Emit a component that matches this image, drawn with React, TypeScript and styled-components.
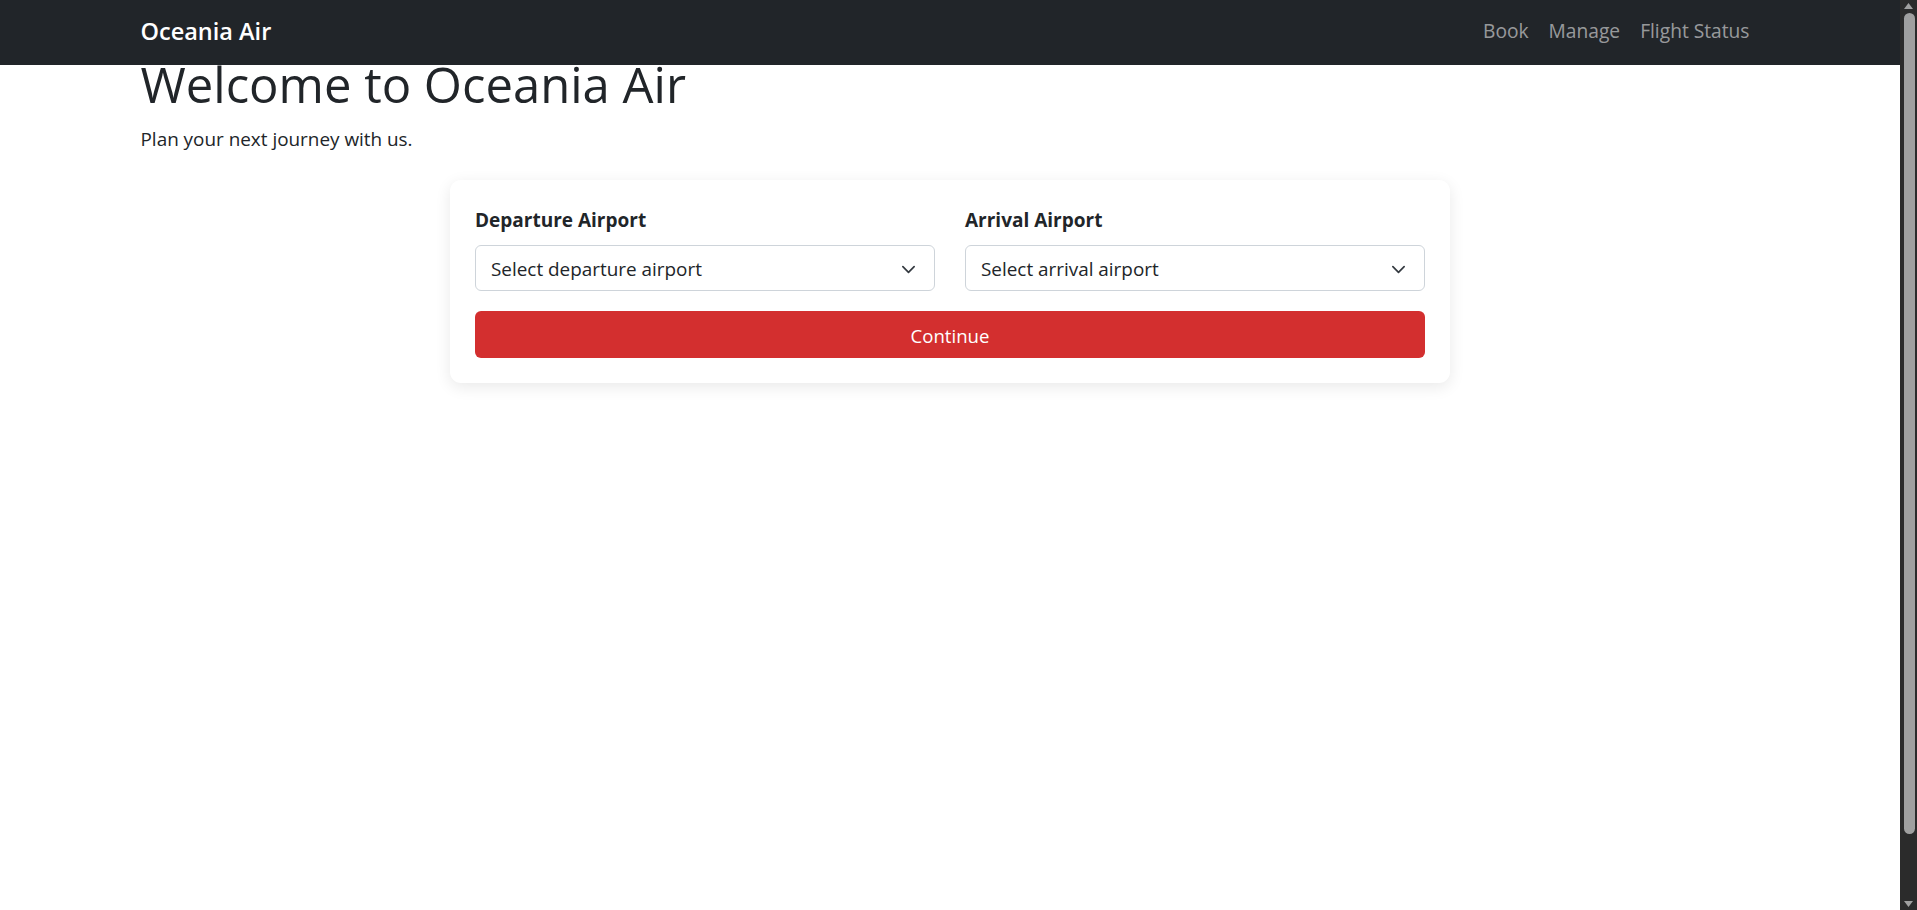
import React from "react";
import styled, { createGlobalStyle } from "styled-components";

const GlobalStyle = createGlobalStyle`
  *, *::before, *::after { box-sizing: border-box; }
  body {
    margin: 0;
    padding-right: 17px;
    font-family: "Open Sans", "Noto Sans", Arial, sans-serif;
    font-size: 19px;
    line-height: 1.5;
    color: #212529;
    background: #ffffff;
  }
`;

/* Window scrollbar drawn over the right edge, as in the reference */
const ScrollRail = styled.div`
  position: fixed;
  top: 0;
  right: 0;
  bottom: 0;
  z-index: 20;
  width: 17px;
  background: #2b2b2b;
  display: flex;
  flex-direction: column;
  align-items: center;
  padding: 3px 0;
`;

const ScrollArrow = styled.svg`
  width: 9px;
  height: 6px;
  flex: none;
`;

const ScrollTrack = styled.div`
  flex: 1;
  width: 100%;
  padding: 4px 2px 67px 4px;
  display: flex;
`;

const ScrollThumb = styled.div`
  flex: 1;
  background: #a0a0a0;
  border-radius: 6px;
`;

const NavBar = styled.nav`
  position: fixed;
  top: 0;
  left: 0;
  right: 17px;
  z-index: 10;
  height: 65px;
  background: #212529;
  padding-bottom: 4px;
  display: flex;
  align-items: center;
`;

const Container = styled.div`
  width: 100%;
  max-width: 1619px;
  margin: 0 auto;
`;

const NavInner = styled(Container)`
  display: flex;
  align-items: center;
  justify-content: space-between;
`;

const Brand = styled.a`
  font-size: 23.5px;
  font-weight: 600;
  line-height: 34px;
  color: #ffffff;
  text-decoration: none;
`;

const NavLinks = styled.ul`
  display: flex;
  list-style: none;
  margin: 0;
  padding: 0;
`;

const NavLink = styled.a`
  display: block;
  padding: 0 10px;
  font-size: 19.2px;
  line-height: 27px;
  color: rgba(255, 255, 255, 0.55);
  text-decoration: none;
`;

const Main = styled.main`
  padding: 55px 0 40px;
  min-height: 100vh;
`;

const Title = styled.h1`
  margin: 0 0 12px;
  font-size: 49px;
  font-weight: 500;
  line-height: 1.2;
  color: #212529;
`;

const Lead = styled.p`
  margin: 0 0 27px;
  font-size: 18.9px;
  line-height: 27px;
`;

const Card = styled.form`
  width: 1000px;
  margin: 0 auto;
  padding: 27px 25px 25px;
  background: #ffffff;
  border-radius: 11px;
  box-shadow: 0 4px 16px rgba(0, 0, 0, 0.09);
`;

const FieldRow = styled.div`
  display: grid;
  grid-template-columns: 1fr 1fr;
  column-gap: 30px;
  margin-bottom: 20px;
`;

const Field = styled.div`
  display: flex;
  flex-direction: column;
`;

const Label = styled.label`
  margin-bottom: 11px;
  font-size: 19px;
  font-weight: 700;
  line-height: 27px;
  color: #212529;
`;

const SelectWrap = styled.div`
  position: relative;
`;

const Select = styled.select`
  display: block;
  width: 100%;
  height: 46px;
  padding: 2px 44px 0 15px;
  font-family: inherit;
  font-size: 18.9px;
  line-height: 1.5;
  color: #212529;
  background: #ffffff;
  border: 1px solid #ced4da;
  border-radius: 6px;
  appearance: none;
  -webkit-appearance: none;
`;

const Chevron = styled.svg`
  position: absolute;
  right: 19px;
  top: 50%;
  width: 15px;
  height: 15px;
  margin-top: -6px;
  pointer-events: none;
`;

const SubmitButton = styled.button`
  display: block;
  width: 100%;
  height: 47px;
  padding: 3px 12px 0;
  font-family: inherit;
  font-size: 18.6px;
  line-height: 1.5;
  color: #ffffff;
  background: #d32f2f;
  border: none;
  border-radius: 6px;
  cursor: pointer;
`;

const AirportSelect: React.FC<{ id: string; placeholder: string }> = ({ id, placeholder }) => (
  <SelectWrap>
    <Select id={id} defaultValue="">
      <option value="" disabled>
        {placeholder}
      </option>
      <option value="AKL">Auckland (AKL)</option>
      <option value="SYD">Sydney (SYD)</option>
      <option value="MEL">Melbourne (MEL)</option>
    </Select>
    <Chevron viewBox="0 0 16 16" aria-hidden="true">
      <path d="m2 5 6 6 6-6" fill="none" stroke="#343a40" strokeWidth="1.8" strokeLinecap="round" strokeLinejoin="round" />
    </Chevron>
  </SelectWrap>
);

export default function App() {
  return (
    <>
      <GlobalStyle />
      <NavBar>
        <NavInner>
          <Brand href="#">Oceania Air</Brand>
          <NavLinks>
            <li><NavLink href="#">Book</NavLink></li>
            <li><NavLink href="#">Manage</NavLink></li>
            <li><NavLink href="#">Flight Status</NavLink></li>
          </NavLinks>
        </NavInner>
      </NavBar>
      <Main>
        <Container>
          <Title>Welcome to Oceania Air</Title>
          <Lead>Plan your next journey with us.</Lead>
          <Card onSubmit={(e) => e.preventDefault()}>
            <FieldRow>
              <Field>
                <Label htmlFor="dep">Departure Airport</Label>
                <AirportSelect id="dep" placeholder="Select departure airport" />
              </Field>
              <Field>
                <Label htmlFor="arr">Arrival Airport</Label>
                <AirportSelect id="arr" placeholder="Select arrival airport" />
              </Field>
            </FieldRow>
            <SubmitButton type="submit">Continue</SubmitButton>
          </Card>
        </Container>
      </Main>
      <ScrollRail aria-hidden="true">
        <ScrollArrow viewBox="0 0 9 6">
          <path d="M4.5 0 9 6H0z" fill="#a0a0a0" />
        </ScrollArrow>
        <ScrollTrack>
          <ScrollThumb />
        </ScrollTrack>
        <ScrollArrow viewBox="0 0 9 6">
          <path d="M0 0h9L4.5 6z" fill="#a0a0a0" />
        </ScrollArrow>
      </ScrollRail>
    </>
  );
}
